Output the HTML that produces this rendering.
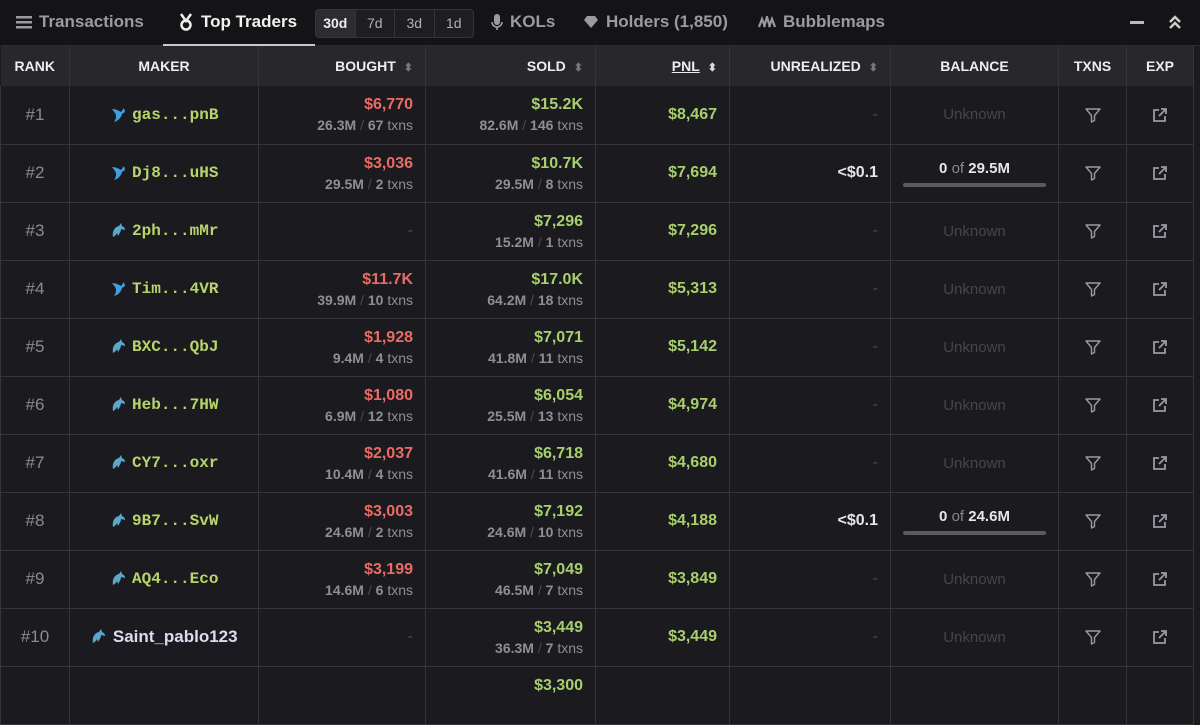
<!DOCTYPE html><html><head><style>
*{margin:0;padding:0;box-sizing:border-box}
body{width:1200px;height:675px;overflow:hidden;background:#1b1b1f;font-family:"Liberation Sans",sans-serif;color:#e6e6ea;position:relative}
.top{position:absolute;left:0;top:0;width:1200px;height:46px;background:#141417;border-bottom:1px solid #2a2a30}
.tab{position:absolute;top:12px;font-size:17px;font-weight:bold;color:#9a9aa2;display:flex;align-items:center;gap:7px}
.seg{position:absolute;left:315px;top:9px;width:159px;height:29px;border:1px solid #34343a;border-radius:4px;background:#1e1e22;display:flex}
.seg div{flex:1;text-align:center;line-height:27px;font-size:14px;color:#b0b0b8;border-left:1px solid #34343a}
.seg div:first-child{border:none;background:#2c2c32;color:#eee;font-weight:bold}
table{position:absolute;left:0;top:46px;border-collapse:collapse;table-layout:fixed;width:1193px}
th{height:40px;background:#27272c;font-size:14px;font-weight:bold;color:#eee;border-right:1px solid #34343a;padding:0 12px}
td{height:58px;border:1px solid #34343a;border-top:none;font-size:16px;font-weight:bold;padding:0 12px}
.r{text-align:right}.c{text-align:center}
.rank{color:#8a8a92;font-weight:normal;text-align:center;font-size:17px}
.g{color:#a7cf6d}.red{color:#ea6b65}
.sub{font-size:14px;color:#8e8e96;font-weight:bold;margin-top:3px}
.sub b{color:#4a4a50;font-weight:normal}
.sub i{font-style:normal;font-weight:normal;color:#8e8e96}
.mono{font-family:"Liberation Mono",monospace;color:#b8d56c;font-size:16px;vertical-align:middle}
.dash{color:#4a4a50;font-weight:normal}
.unk{color:#45454b;font-weight:normal;text-align:center;font-size:15px}
.bar{height:4px;background:#5a5a62;border-radius:2px;margin:6px 0 0}
.srt{color:#77777f;font-size:11px;margin-left:8px}
svg{vertical-align:middle}
.last td{vertical-align:top;padding-top:10px}
</style></head><body>
<div class="top">
<div class="tab" style="left:16px"><svg width="16" height="14"><rect y="1" width="16" height="2.5" fill="#9a9aa2"/><rect y="6" width="16" height="2.5" fill="#9a9aa2"/><rect y="11" width="16" height="2.5" fill="#9a9aa2"/></svg>Transactions</div>
<div class="tab" style="left:178px;color:#f2f2f2"><svg width="16" height="18"><path d="M3 1l5 7 5-7" stroke="#eee" stroke-width="2.5" fill="none"/><circle cx="8" cy="12" r="4.5" fill="none" stroke="#eee" stroke-width="2.5"/></svg>Top Traders</div>
<div style="position:absolute;left:163px;top:44px;width:152px;height:3px;background:#c8c8cc"></div>
<div class="seg"><div>30d</div><div>7d</div><div>3d</div><div>1d</div></div>
<div class="tab" style="left:491px"><svg width="12" height="18"><rect x="3" y="1" width="6" height="11" rx="3" fill="#9a9aa2"/><path d="M1 9a5 5 0 0 0 10 0M6 14v3" stroke="#9a9aa2" stroke-width="1.6" fill="none"/></svg>KOLs</div>
<div class="tab" style="left:583px"><svg width="16" height="14"><path d="M1 5l3-4h8l3 4-7 8z" fill="#9a9aa2"/></svg>Holders (1,850)</div>
<div class="tab" style="left:758px"><svg width="18" height="12"><path d="M1 11l3-8 3 8M6 11l3-10 3 10M11 11l3-8 3 8" stroke="#9a9aa2" stroke-width="2.2" fill="none"/></svg>Bubblemaps</div>
<div style="position:absolute;left:1130px;top:21px;width:14px;height:3px;background:#bbb"></div>
<svg style="position:absolute;left:1168px;top:14px" width="14" height="16"><path d="M2 8l5-5 5 5M2 14l5-5 5 5" stroke="#ccc" stroke-width="2.5" fill="none"/></svg>
</div>
<svg width="0" height="0" style="position:absolute"><defs>
<g id="w"><path d="M2 3c3 0 6 1 9 3l3-4 1 4-3 2c-1 4-4 7-8 8 2-3 3-6 1-9z" fill="#3f9fe0"/></g>
<g id="d"><path d="M3 15c-1-5 1-10 6-11l2-3 1 3c2 1 3 2 3 4l-4-1c0 3-2 5-3 7l-1-3c-1 2-2 3-4 4z" fill="#5ba8cc"/></g>
<g id="f"><path d="M2 3h14l-5.5 6.5v5l-3 1.5v-6.5z" fill="none" stroke="#9a9aa2" stroke-width="1.4" stroke-linejoin="round"/></g>
<g id="e"><path d="M8 4H3v11h11v-5M10 3h5v5M15 3l-7 7" fill="none" stroke="#9a9aa2" stroke-width="1.8"/></g>
</defs></svg>
<table>
<colgroup><col style="width:69px"><col style="width:189px"><col style="width:167px"><col style="width:170px"><col style="width:134px"><col style="width:161px"><col style="width:168px"><col style="width:68px"><col style="width:67px"></colgroup>
<tr><th>RANK</th><th>MAKER</th><th class="r">BOUGHT<span class="srt">⬍</span></th><th class="r">SOLD<span class="srt">⬍</span></th><th class="r"><u>PNL</u><span class="srt" style="color:#ddd">⬍</span></th><th class="r">UNREALIZED<span class="srt">⬍</span></th><th>BALANCE</th><th>TXNS</th><th>EXP</th></tr>
<tr><td class="rank">#1</td><td class="c"><svg width="18" height="18"><use href="#w"/></svg> <span class="mono">gas...pnB</span></td><td class="r"><div class="red">$6,770</div><div class="sub">26.3M <b>/</b> 67 <i>txns</i></div></td><td class="r"><div class="g">$15.2K</div><div class="sub">82.6M <b>/</b> 146 <i>txns</i></div></td><td class="r g">$8,467</td><td class="r dash">-</td><td class="unk">Unknown</td><td class="c"><svg width="18" height="18"><use href="#f"/></svg></td><td class="c"><svg width="18" height="18"><use href="#e"/></svg></td></tr>
<tr><td class="rank">#2</td><td class="c"><svg width="18" height="18"><use href="#w"/></svg> <span class="mono">Dj8...uHS</span></td><td class="r"><div class="red">$3,036</div><div class="sub">29.5M <b>/</b> 2 <i>txns</i></div></td><td class="r"><div class="g">$10.7K</div><div class="sub">29.5M <b>/</b> 8 <i>txns</i></div></td><td class="r g">$7,694</td><td class="r">&lt;$0.1</td><td class="c" style="font-size:15px">0 <span style="color:#888;font-weight:normal">of</span> 29.5M<div class="bar"></div></td><td class="c"><svg width="18" height="18"><use href="#f"/></svg></td><td class="c"><svg width="18" height="18"><use href="#e"/></svg></td></tr>
<tr><td class="rank">#3</td><td class="c"><svg width="18" height="18"><use href="#d"/></svg> <span class="mono">2ph...mMr</span></td><td class="r dash">-</td><td class="r"><div class="g">$7,296</div><div class="sub">15.2M <b>/</b> 1 <i>txns</i></div></td><td class="r g">$7,296</td><td class="r dash">-</td><td class="unk">Unknown</td><td class="c"><svg width="18" height="18"><use href="#f"/></svg></td><td class="c"><svg width="18" height="18"><use href="#e"/></svg></td></tr>
<tr><td class="rank">#4</td><td class="c"><svg width="18" height="18"><use href="#w"/></svg> <span class="mono">Tim...4VR</span></td><td class="r"><div class="red">$11.7K</div><div class="sub">39.9M <b>/</b> 10 <i>txns</i></div></td><td class="r"><div class="g">$17.0K</div><div class="sub">64.2M <b>/</b> 18 <i>txns</i></div></td><td class="r g">$5,313</td><td class="r dash">-</td><td class="unk">Unknown</td><td class="c"><svg width="18" height="18"><use href="#f"/></svg></td><td class="c"><svg width="18" height="18"><use href="#e"/></svg></td></tr>
<tr><td class="rank">#5</td><td class="c"><svg width="18" height="18"><use href="#d"/></svg> <span class="mono">BXC...QbJ</span></td><td class="r"><div class="red">$1,928</div><div class="sub">9.4M <b>/</b> 4 <i>txns</i></div></td><td class="r"><div class="g">$7,071</div><div class="sub">41.8M <b>/</b> 11 <i>txns</i></div></td><td class="r g">$5,142</td><td class="r dash">-</td><td class="unk">Unknown</td><td class="c"><svg width="18" height="18"><use href="#f"/></svg></td><td class="c"><svg width="18" height="18"><use href="#e"/></svg></td></tr>
<tr><td class="rank">#6</td><td class="c"><svg width="18" height="18"><use href="#d"/></svg> <span class="mono">Heb...7HW</span></td><td class="r"><div class="red">$1,080</div><div class="sub">6.9M <b>/</b> 12 <i>txns</i></div></td><td class="r"><div class="g">$6,054</div><div class="sub">25.5M <b>/</b> 13 <i>txns</i></div></td><td class="r g">$4,974</td><td class="r dash">-</td><td class="unk">Unknown</td><td class="c"><svg width="18" height="18"><use href="#f"/></svg></td><td class="c"><svg width="18" height="18"><use href="#e"/></svg></td></tr>
<tr><td class="rank">#7</td><td class="c"><svg width="18" height="18"><use href="#d"/></svg> <span class="mono">CY7...oxr</span></td><td class="r"><div class="red">$2,037</div><div class="sub">10.4M <b>/</b> 4 <i>txns</i></div></td><td class="r"><div class="g">$6,718</div><div class="sub">41.6M <b>/</b> 11 <i>txns</i></div></td><td class="r g">$4,680</td><td class="r dash">-</td><td class="unk">Unknown</td><td class="c"><svg width="18" height="18"><use href="#f"/></svg></td><td class="c"><svg width="18" height="18"><use href="#e"/></svg></td></tr>
<tr><td class="rank">#8</td><td class="c"><svg width="18" height="18"><use href="#d"/></svg> <span class="mono">9B7...SvW</span></td><td class="r"><div class="red">$3,003</div><div class="sub">24.6M <b>/</b> 2 <i>txns</i></div></td><td class="r"><div class="g">$7,192</div><div class="sub">24.6M <b>/</b> 10 <i>txns</i></div></td><td class="r g">$4,188</td><td class="r">&lt;$0.1</td><td class="c" style="font-size:15px">0 <span style="color:#888;font-weight:normal">of</span> 24.6M<div class="bar"></div></td><td class="c"><svg width="18" height="18"><use href="#f"/></svg></td><td class="c"><svg width="18" height="18"><use href="#e"/></svg></td></tr>
<tr><td class="rank">#9</td><td class="c"><svg width="18" height="18"><use href="#d"/></svg> <span class="mono">AQ4...Eco</span></td><td class="r"><div class="red">$3,199</div><div class="sub">14.6M <b>/</b> 6 <i>txns</i></div></td><td class="r"><div class="g">$7,049</div><div class="sub">46.5M <b>/</b> 7 <i>txns</i></div></td><td class="r g">$3,849</td><td class="r dash">-</td><td class="unk">Unknown</td><td class="c"><svg width="18" height="18"><use href="#f"/></svg></td><td class="c"><svg width="18" height="18"><use href="#e"/></svg></td></tr>
<tr><td class="rank">#10</td><td class="c"><svg width="18" height="18"><use href="#d"/></svg> <span style="color:#dcdcf0;font-size:17px;vertical-align:middle">Saint_pablo123</span></td><td class="r dash">-</td><td class="r"><div class="g">$3,449</div><div class="sub">36.3M <b>/</b> 7 <i>txns</i></div></td><td class="r g">$3,449</td><td class="r dash">-</td><td class="unk">Unknown</td><td class="c"><svg width="18" height="18"><use href="#f"/></svg></td><td class="c"><svg width="18" height="18"><use href="#e"/></svg></td></tr>
<tr class="last"><td></td><td></td><td></td><td class="r"><div class="g">$3,300</div></td><td></td><td></td><td></td><td></td><td></td></tr>
</table>
</body></html>
